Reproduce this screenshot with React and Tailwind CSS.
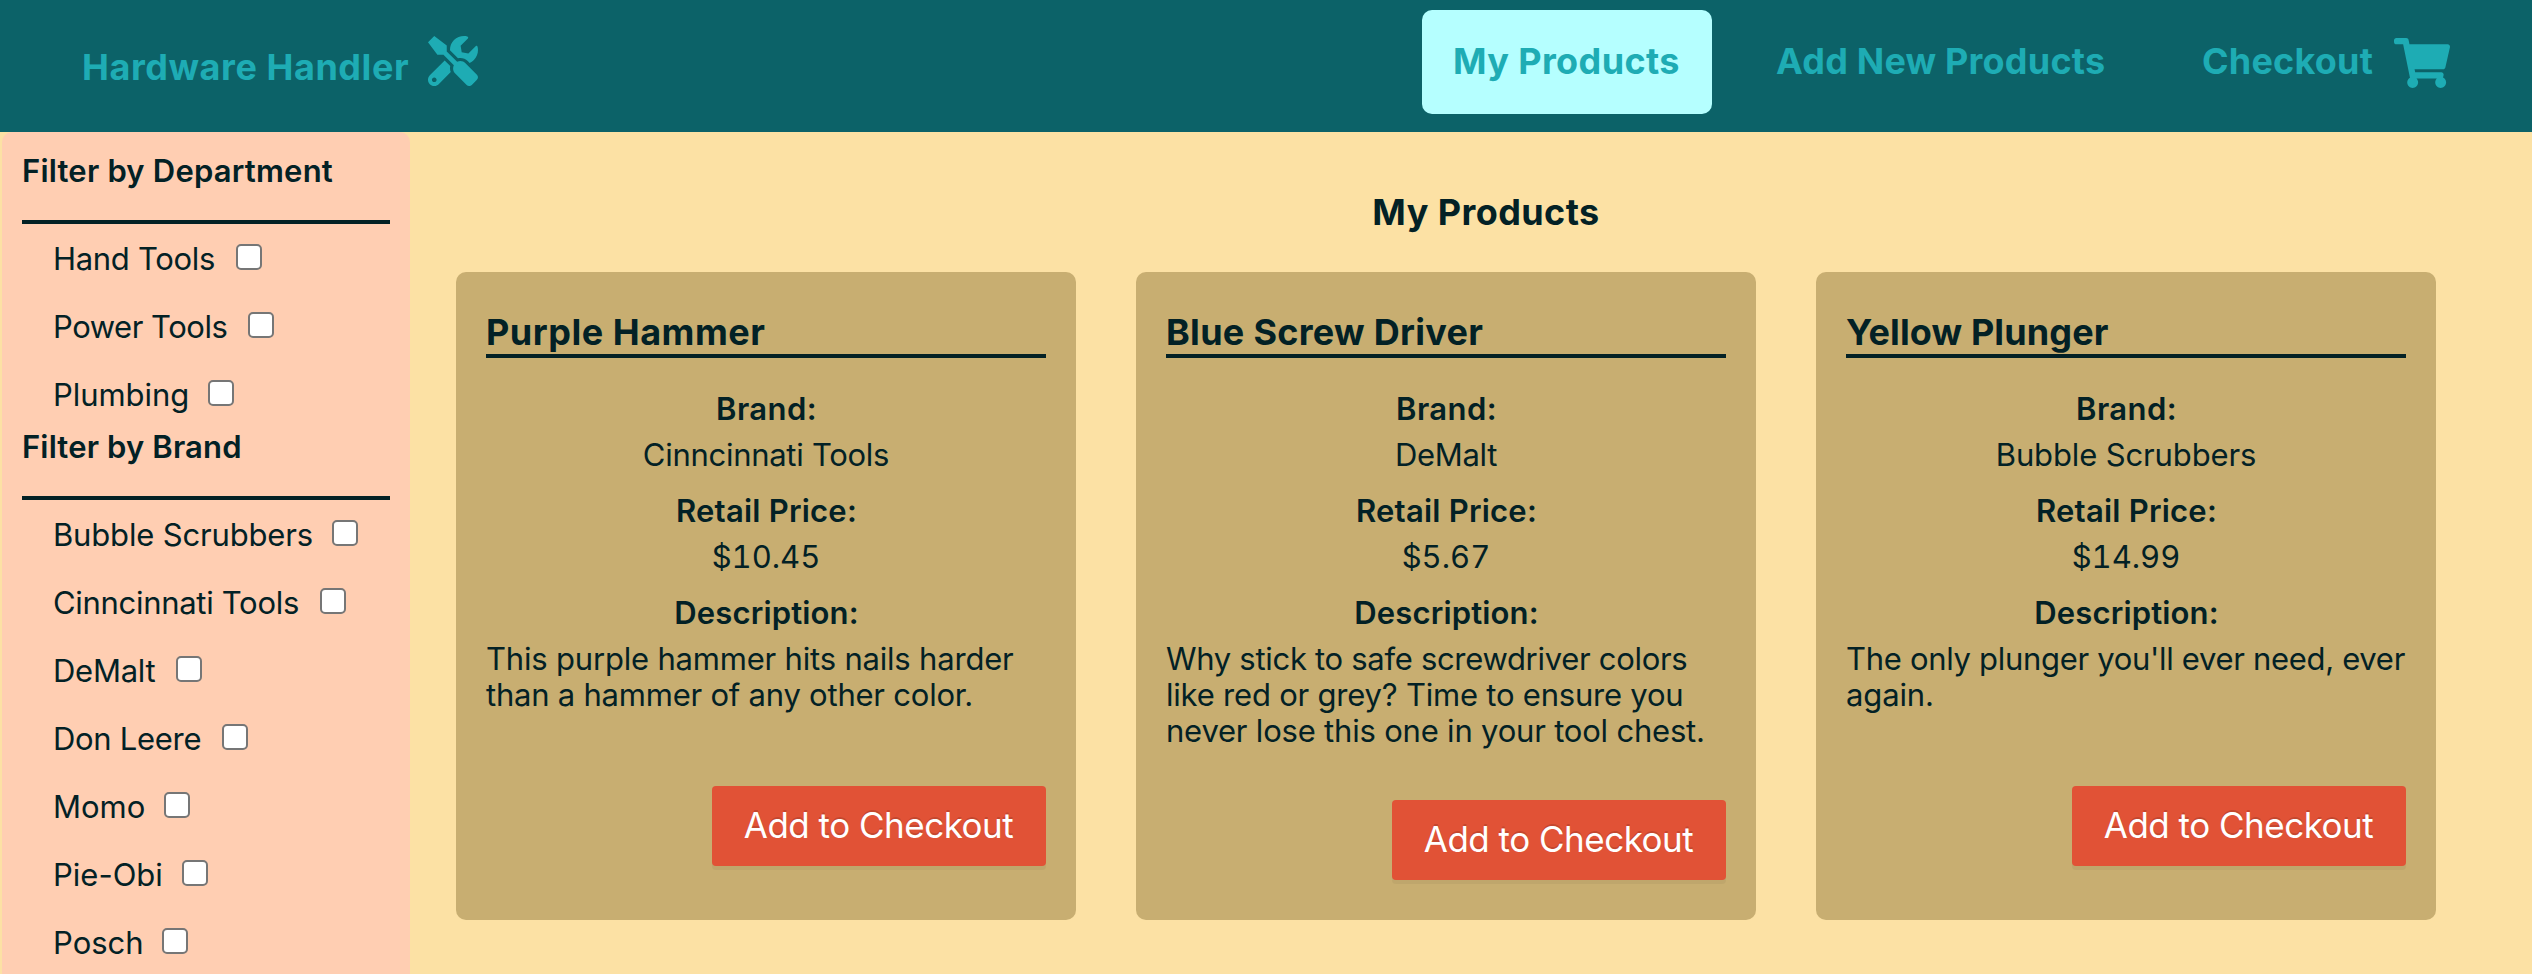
import { FaShoppingCart, FaTools } from "react-icons/fa";

const departments = [
  { name: "Hand Tools", style: "w-[183px] tracking-[-0.3px]" },
  { name: "Power Tools", style: "w-[195px] tracking-[-0.47px]" },
  { name: "Plumbing", style: "w-[155px] tracking-[-0.06px]" },
];

const brands = [
  { name: "Bubble Scrubbers", style: "w-[279px] tracking-[-0.16px]" },
  { name: "Cinncinnati Tools", style: "w-[267px] tracking-[-0.3px]" },
  { name: "DeMalt", style: "w-[123px] tracking-[-0.25px]" },
  { name: "Don Leere", style: "w-[169px] tracking-[-0.3px]" },
  { name: "Momo", style: "w-[111px]" },
  { name: "Pie-Obi", style: "w-[129px]" },
  { name: "Posch", style: "w-[109px]" },
];

const products = [
  {
    name: "Purple Hammer",
    nameStyle: "tracking-[0.52px]",
    brand: "Cinncinnati Tools",
    brandStyle: "tracking-[-0.28px]",
    price: "$10.45",
    lines: [
      { text: "This purple hammer hits nails harder", style: "tracking-[-0.19px]" },
      { text: "than a hammer of any other color.", style: "tracking-[-0.22px]" },
    ],
  },
  {
    name: "Blue Screw Driver",
    nameStyle: "tracking-[0.29px]",
    brand: "DeMalt",
    brandStyle: "tracking-[-0.3px]",
    price: "$5.67",
    lines: [
      { text: "Why stick to safe screwdriver colors", style: "tracking-[-0.3px]" },
      { text: "like red or grey? Time to ensure you", style: "tracking-[-0.21px]" },
      { text: "never lose this one in your tool chest.", style: "tracking-[-0.2px]" },
    ],
  },
  {
    name: "Yellow Plunger",
    nameStyle: "tracking-[0.12px]",
    brand: "Bubble Scrubbers",
    brandStyle: "tracking-[-0.13px]",
    price: "$14.99",
    lines: [
      { text: "The only plunger you'll ever need, ever", style: "tracking-[-0.31px]" },
      { text: "again.", style: "tracking-[-0.13px]" },
    ],
  },
];

function Header() {
  return (
    <header className="flex h-[132px] items-start justify-between bg-[#0c6268] text-[36px] leading-[50px] font-bold whitespace-nowrap text-[#1eacb4]">
      <div className="flex pl-[82px]">
        <span className="mt-[42px] w-[346px] tracking-[0.56px]">Hardware Handler</span>
        <FaTools className="mt-9 h-[50px] w-[50px]" />
      </div>
      <nav className="mt-2.5 flex gap-8 pr-[82px]">
        <a className="h-[104px] w-[290px] rounded-[10px] bg-[#b5ffff] pt-[26px] pl-[31px] tracking-[0.38px]">
          My Products
        </a>
        <a className="h-[104px] w-[394px] pt-[26px] pl-8 tracking-[0.2px]">Add New Products</a>
        <a className="flex h-[104px] pl-8">
          <span className="mt-[26px] w-[192px] tracking-[0.2px]">Checkout</span>
          <FaShoppingCart className="mt-7 h-[50px] w-14" />
        </a>
      </nav>
    </header>
  );
}

function FilterGroup({ title, titleStyle, options }) {
  return (
    <section>
      <h4 className={`h-9 font-semibold ${titleStyle}`}>{title}</h4>
      <hr className="mt-[31px] h-1 border-0 bg-[#032125]" />
      <div className="flex flex-col gap-8 pt-[17px] pl-[31px]">
        {options.map((o) => (
          <label key={o.name} className="flex h-9">
            <span className={`shrink-0 ${o.style}`}>{o.name}</span>
            <input
              type="checkbox"
              className="mt-[3px] h-[26px] w-[26px] shrink-0 appearance-none rounded-[5px] border-2 border-[#767676] bg-white"
            />
          </label>
        ))}
      </div>
    </section>
  );
}

function Field({ label, labelStyle, children }) {
  return (
    <div className="flex flex-col gap-2.5">
      <p className={`text-center font-semibold ${labelStyle}`}>{label}</p>
      {children}
    </div>
  );
}

function ProductCard({ product }) {
  return (
    <article className="h-[648px] w-[620px] rounded-[10px] bg-[#c8ae71] px-[30px] pt-10">
      <h3
        className={`h-[46px] border-b-4 border-[#032125] text-[36px] leading-10 font-bold ${product.nameStyle}`}
      >
        {product.name}
      </h3>
      <div className="mt-[33px] flex flex-col gap-5">
        <Field label="Brand:" labelStyle="pl-px tracking-[0.4px]">
          <p className={`text-center ${product.brandStyle}`}>{product.brand}</p>
        </Field>
        <Field label="Retail Price:" labelStyle="pl-px tracking-[0.23px]">
          <p className="text-center tabular-nums">{product.price}</p>
        </Field>
        <Field label="Description:" labelStyle="pl-px tracking-[0.16px]">
          <p className="min-h-[94px]">
            {product.lines.map((l) => (
              <span key={l.text} className={`block ${l.style}`}>
                {l.text}
              </span>
            ))}
          </p>
        </Field>
      </div>
      <button className="mt-[51px] ml-auto flex h-20 w-[334px] items-center justify-center rounded bg-[#e15236] pr-px pb-0.5 text-[35px] leading-[50px] tracking-[-0.5px] text-white shadow-[0_4px_0_rgba(0,0,0,0.045)] [text-shadow:0_-2px_0_rgba(0,0,0,0.12)]">
        Add to Checkout
      </button>
    </article>
  );
}

export default function App() {
  return (
    <div className="flex h-[974px] w-[2532px] flex-col overflow-hidden bg-[#fce1a4] font-[Inter,sans-serif] text-[31px] leading-9 whitespace-nowrap text-[#032125]">
      <Header />
      <div className="flex min-h-0 flex-1">
        <aside className="ml-0.5 flex w-[408px] shrink-0 flex-col gap-4 rounded-t-[10px] bg-[#ffceb2] pt-[21px] pr-5 pl-5">
          <FilterGroup
            title="Filter by Department"
            titleStyle="tracking-[0.2px]"
            options={departments}
          />
          <FilterGroup title="Filter by Brand" titleStyle="tracking-[0.15px]" options={brands} />
        </aside>
        <main className="ml-[30px] flex-1 pt-[60px]">
          <h2 className="text-center text-[36px] leading-10 font-bold tracking-[0.42px]">
            My Products
          </h2>
          <div className="mt-10 flex gap-[60px] pl-4">
            {products.map((p) => (
              <ProductCard key={p.name} product={p} />
            ))}
          </div>
        </main>
      </div>
    </div>
  );
}
